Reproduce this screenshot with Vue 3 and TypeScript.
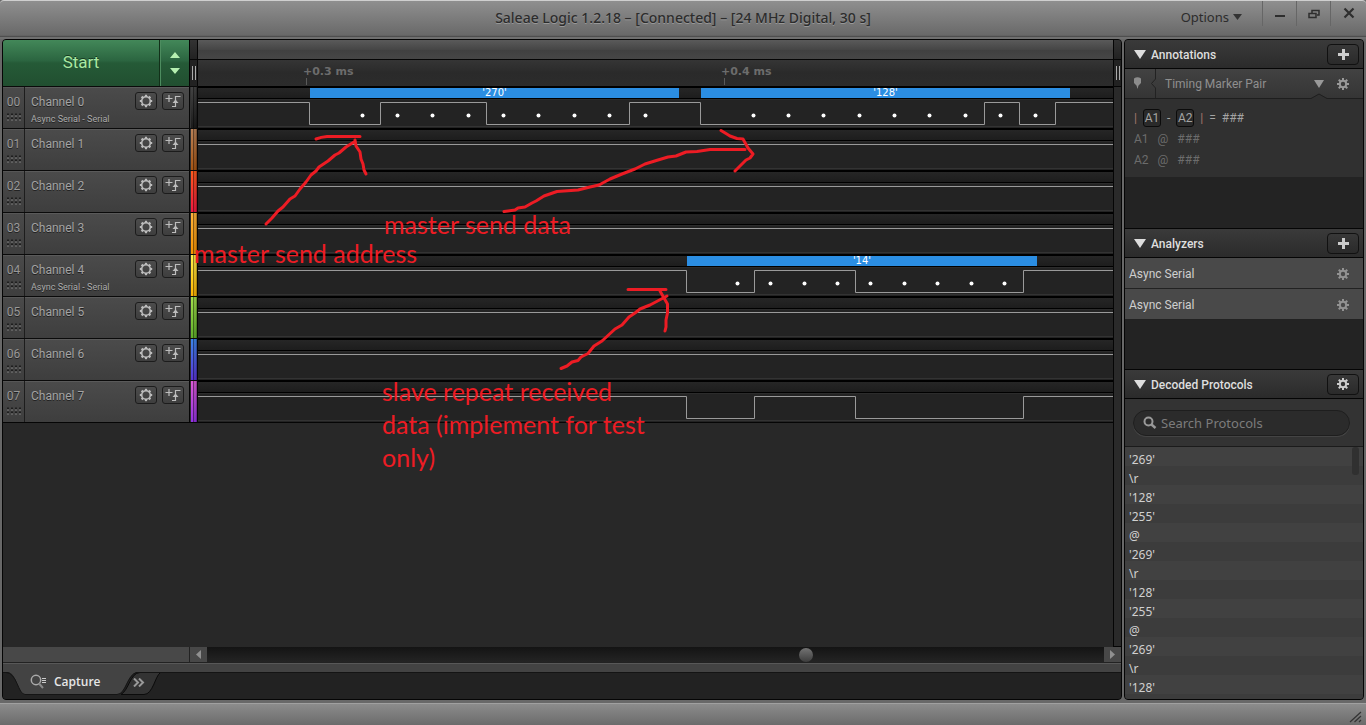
<script setup lang="ts">
import { ref } from 'vue'

interface Wave {
  edges: number[]
  samples: number[]
  frames: { x: number; width: number; text: string }[]
}
interface Channel {
  id: string
  name: string
  note: string
  strip: string
  wave: Wave
}

const idle: Wave = { edges: [], samples: [], frames: [] }
const masterWave: Wave = {
  edges: [111, 182, 288, 431, 502, 786, 821, 857],
  samples: [164, 199, 234, 270, 305, 340, 376, 411, 447, 555, 590, 625, 661, 696, 731, 767, 802, 837],
  frames: [
    { x: 112, width: 369, text: "'270'" },
    { x: 503, width: 369, text: "'128'" },
  ],
}
const slaveEdges = [488, 556, 657, 825]
const slaveWave: Wave = {
  edges: slaveEdges,
  samples: [539, 572, 606, 639, 672, 706, 739, 773, 806],
  frames: [{ x: 489, width: 350, text: "'14'" }],
}

const channels: Channel[] = [
  { id: '00', name: 'Channel 0', note: 'Async Serial - Serial', strip: 'black', wave: masterWave },
  { id: '01', name: 'Channel 1', note: '', strip: 'brown', wave: idle },
  { id: '02', name: 'Channel 2', note: '', strip: 'red', wave: idle },
  { id: '03', name: 'Channel 3', note: '', strip: 'orange', wave: idle },
  { id: '04', name: 'Channel 4', note: 'Async Serial - Serial', strip: 'yellow', wave: slaveWave },
  { id: '05', name: 'Channel 5', note: '', strip: 'green', wave: idle },
  { id: '06', name: 'Channel 6', note: '', strip: 'blue', wave: idle },
  { id: '07', name: 'Channel 7', note: '', strip: 'violet', wave: { edges: slaveEdges, samples: [], frames: [] } },
]

const HIGH = 16.5
const LOW = 38.5

// The line starts high and toggles at every edge.
function tracePath(edges: number[]): string {
  let level = HIGH
  let d = `M0 ${level}`
  for (const edge of edges) {
    level = level === HIGH ? LOW : HIGH
    d += `H${edge + 0.5}V${level}`
  }
  return `${d}H4000`
}

const teeth = [0, 45, 90, 135, 180, 225, 270, 315]
const analyzers = ['Async Serial', 'Async Serial']
const decoded = ["'269'", '\\r', "'128'", "'255'", '@', "'269'", '\\r', "'128'", "'255'", '@', "'269'", '\\r', "'128'"]
const query = ref('')
const scroll = ref(67)
</script>

<template>
  <div class="window">
    <svg class="defs" width="0" height="0" aria-hidden="true">
      <symbol id="gear" viewBox="0 0 14 14">
        <circle cx="7" cy="7" r="3.2" fill="none" stroke="currentColor" stroke-width="2" />
        <path v-for="a in teeth" :key="a" d="M6 3.500V1H8V3.500Z" fill="currentColor" :transform="`rotate(${a} 7 7)`" />
      </symbol>
      <symbol id="gear-open" viewBox="0 0 14 14">
        <circle cx="7" cy="7" r="4.300" fill="none" stroke="currentColor" stroke-width="1.600" />
        <path v-for="a in teeth" :key="a" d="M5.900 3V.8H8.100V3Z" fill="currentColor" :transform="`rotate(${a} 7 7)`" />
      </symbol>
      <symbol id="trigger" viewBox="0 0 16 14">
        <path d="M.5 4.500H7.500M4 1V8M7 12.500H10.500V2.500H15.500" fill="none" stroke="currentColor" stroke-width="1.200" />
        <path d="M7.500 9L10.500 5.500L13.500 9Z" fill="currentColor" />
      </symbol>
    </svg>

    <header class="titlebar">
      <h1>Saleae Logic 1.2.18 – [Connected] – [24 MHz Digital, 30 s]</h1>
      <div class="title-actions">
        <button class="options" type="button">Options
          <svg width="9" height="6" viewBox="0 0 9 6"><path d="M0 0H9L4.5 6Z" fill="#333" /></svg>
        </button>
        <button class="win" type="button" aria-label="Minimize">
          <svg width="12" height="12" viewBox="0 0 12 12"><path d="M1 8H11" stroke="#2e2e2e" stroke-width="2" /></svg>
        </button>
        <button class="win" type="button" aria-label="Restore">
          <svg width="12" height="12" viewBox="0 0 12 12"><path d="M4 5V2.5H11V7H9M1 5.5H8V9.500H1Z" fill="none" stroke="#2e2e2e" stroke-width="1.500" /></svg>
        </button>
        <button class="win last" type="button" aria-label="Close">
          <svg width="12" height="12" viewBox="0 0 12 12"><path d="M1.500 1.500L10.500 10.500M10.500 1.500L1.500 10.500" stroke="#2e2e2e" stroke-width="2.200" /></svg>
        </button>
      </div>
    </header>

    <div class="content">
      <main class="main">
        <div class="workspace">
          <div class="board">
            <div class="head">
              <div class="start">
                <button class="start-run" type="button">Start</button>
                <button class="start-menu" type="button" aria-label="Capture settings">
                  <svg width="10" height="22" viewBox="0 0 10 22"><path d="M5 0L10 6H0ZM0 16H10L5 22Z" fill="#b5efb0" /></svg>
                </button>
              </div>
              <div class="grip"><i></i><b></b></div>
              <div class="timeline">
                <div class="overview"></div>
                <svg class="ruler" width="100%" height="26">
                  <text x="105" y="15">+0.3 ms</text>
                  <text x="523" y="15">+0.4 ms</text>
                  <path d="M108.500 18V25M526.500 18V25" stroke="#5a5a5a" />
                </svg>
              </div>
            </div>

            <section v-for="c in channels" :key="c.id" class="channel">
              <div class="index">
                <span>{{ c.id }}</span>
                <svg width="16" height="8" viewBox="0 0 16 8">
                  <path d="M1 1.500H15M1 5.500H15" stroke="#1e1e1e" stroke-width="2" stroke-dasharray="2 2" />
                  <path d="M1 3H15M1 7H15" stroke="#808080" stroke-dasharray="2 2" />
                </svg>
              </div>
              <div class="label">
                <div class="names">
                  <span class="name">{{ c.name }}</span>
                  <span v-if="c.note" class="note">{{ c.note }}</span>
                </div>
                <button type="button" class="small" :aria-label="c.name + ' settings'">
                  <svg width="14" height="14"><use href="#gear-open" /></svg>
                </button>
                <button type="button" class="small" :aria-label="c.name + ' trigger'">
                  <svg width="16" height="14"><use href="#trigger" /></svg>
                </button>
              </div>
              <div class="strip" :class="c.strip"></div>
              <div class="plot">
                <svg width="100%" height="42">
                  <g v-for="f in c.wave.frames" :key="f.x">
                    <rect :x="f.x" y="2" :width="f.width" height="10" fill="#2b8ee3" />
                    <text class="frame" :x="f.x + f.width / 2" y="10">{{ f.text }}</text>
                  </g>
                  <path :d="tracePath(c.wave.edges)" fill="none" stroke="#9a9a9a" />
                  <circle v-for="s in c.wave.samples" :key="s" :cx="s + 0.5" cy="29.500" r="2" fill="#fff" />
                </svg>
              </div>
            </section>
            <div class="blank"></div>
          </div>
          <div class="rail"><i></i><b></b><u></u></div>
        </div>

        <div class="scroller">
          <div class="scroll-left"></div>
          <button type="button" class="arrow" aria-label="Scroll left">
            <svg width="5" height="9" viewBox="0 0 5 9"><path d="M5 0V9L0 4.500Z" fill="#909090" /></svg>
          </button>
          <input v-model="scroll" class="slide" type="range" min="0" max="100" aria-label="Timeline position">
          <button type="button" class="arrow" aria-label="Scroll right">
            <svg width="5" height="9" viewBox="0 0 5 9"><path d="M0 0V9L5 4.500Z" fill="#909090" /></svg>
          </button>
        </div>
        <div class="band"></div>

        <nav class="tabs">
          <svg class="tab-shape" width="170" height="24" viewBox="0 0 170 24">
            <path d="M118 22.500C126 18 127 1 137 .5H157.500C152 4 150 22.500 141 22.500Z" fill="#333" stroke="#0b0b0b" />
            <path d="M0 0H4C14 0 15 22.500 22 22.500H114C123 22.500 124 2 134 0Z" fill="#434343" />
            <path d="M0 .5H3C14 .5 15 22.500 22 22.500H114C123 22.500 124 2 134 .5H170" fill="none" stroke="#141414" />
          </svg>
          <button type="button" class="tab">
            <svg width="17" height="16" viewBox="0 0 17 16"><circle cx="6" cy="6" r="4.700" fill="none" stroke="#aaa" stroke-width="1.500" /><path d="M9 9.500L13 14" stroke="#888" stroke-width="2" /><path d="M12 4.500H16M12 6.500H16M12 8.500H16" stroke="#ccc" /></svg>
            Capture
          </button>
          <button type="button" class="more" aria-label="More tabs">
            <svg width="12" height="9" viewBox="0 0 12 9"><path d="M1 0.500L5 4.500L1 8.500M6 0.500L10 4.500L6 8.500" fill="none" stroke="#999" stroke-width="2" /></svg>
          </button>
        </nav>
      </main>

      <aside class="side">
        <section class="panel annotations">
          <header>
            <svg class="caret" width="12" height="9" viewBox="0 0 12 9"><path d="M0 0H12L6 9Z" fill="#ddd" /></svg>
            <h2>Annotations</h2>
            <button type="button" aria-label="Add annotation"><svg width="11" height="11" viewBox="0 0 11 11"><path d="M5.500 0V11M0 5.500H11" stroke="#ccc" stroke-width="3" /></svg></button>
          </header>
          <div class="marker-head">
            <svg width="31" height="29" viewBox="0 0 31 29">
              <path d="M9 9.500Q12.500 7 16 9.500V14L13.500 16.500L12.500 20L11.500 16.500L9 14Z" fill="#8c8c8c" />
              <path d="M30.500 0V10L26.500 14.500L30.500 19V29" fill="none" stroke="#222" />
            </svg>
            <span>Timing Marker Pair</span>
            <svg width="10" height="8" viewBox="0 0 10 8"><path d="M0 0H10L5 8Z" fill="#999" /></svg>
            <svg class="dim" width="14" height="14"><use href="#gear" /></svg>
            <svg class="notch" width="16" height="6" viewBox="0 0 16 6"><path d="M0 5.500L8 1L16 5.500V6H0Z" fill="#303030" /><path d="M0 5.500L8 1L16 5.500" fill="none" stroke="#1e1e1e" /></svg>
          </div>
          <div class="marker-body">
            <div class="formula"><span class="bar">|</span><kbd>A1</kbd><span>-</span><kbd>A2</kbd><span class="bar">|</span><span>=</span><span>###</span></div>
            <div class="pair"><span>A1</span><span>@</span><span>###</span></div>
            <div class="pair"><span>A2</span><span>@</span><span>###</span></div>
          </div>
        </section>

        <section class="panel analyzers">
          <header>
            <svg class="caret" width="12" height="9" viewBox="0 0 12 9"><path d="M0 0H12L6 9Z" fill="#ddd" /></svg>
            <h2>Analyzers</h2>
            <button type="button" aria-label="Add analyzer"><svg width="11" height="11" viewBox="0 0 11 11"><path d="M5.500 0V11M0 5.500H11" stroke="#ccc" stroke-width="3" /></svg></button>
          </header>
          <div v-for="(a, i) in analyzers" :key="i" class="analyzer">
            <span>{{ a }}</span>
            <button type="button" aria-label="Analyzer settings"><svg width="14" height="14"><use href="#gear" /></svg></button>
          </div>
        </section>

        <section class="panel protocols">
          <header>
            <svg class="caret" width="12" height="9" viewBox="0 0 12 9"><path d="M0 0H12L6 9Z" fill="#ddd" /></svg>
            <h2>Decoded Protocols</h2>
            <button type="button" aria-label="Protocol settings"><svg width="14" height="14"><use href="#gear" /></svg></button>
          </header>
          <div class="search">
            <label>
              <svg width="14" height="14" viewBox="0 0 14 14"><circle cx="5.500" cy="5.500" r="4" fill="none" stroke="#999" stroke-width="2" /><path d="M8.500 8.500L12.500 12" stroke="#999" stroke-width="2.400" /></svg>
              <input v-model="query" type="text" placeholder="Search Protocols" aria-label="Search Protocols">
            </label>
          </div>
          <ul>
            <li v-for="(d, i) in decoded" :key="i">{{ d }}</li>
          </ul>
          <i class="thumb"></i>
        </section>
      </aside>
    </div>

    <footer class="status">
      <svg width="14" height="14" viewBox="0 0 14 14"><path d="M1 12L12 2M5.500 12L12 6M10 12L12 10" stroke="#333" stroke-width="1.200" /></svg>
    </footer>

    <svg class="markup" aria-hidden="true">
      <g fill="none" stroke="#ed1c24" stroke-width="3" stroke-linecap="round" stroke-linejoin="round">
        <path d="M316 139Q321 137 327 136.500H360M355 140L356 146L360 152L361 159L363 164L364 170L366 174M266 224L272 218L278 211L283 207L290 199L295 196L300 189L306 182L311 175L316 171L319 167L325 163L328 161L335 155L339 153L346 147L354 142" />
        <path d="M504 211.500L515 210L518 208L525 207L532 203L536 201L544 196L557 191.500L578 190L590 187L599 185L610 179L622 174L635 169L645 164L658 160L668 157L676 156L686 152L697 151.500L710 149.500H745M721 130.500L726 133.500L730 136L737 138.500L743 139L748 148L753 154L750 158L746 160L741 165L735 171" />
        <path d="M628 289.500H666M660 291L664 298L667.500 304V313L666 320V327L665 331M561 368.500L567 366L572 362L578 360.500L581 357L588 353.500L594 346L602 341L615 329L622 325L629 317L635 313L640 309L650 305L667 296" />
      </g>
      <text x="384" y="234">master send data</text>
      <text x="194" y="263">master send address</text>
      <text x="382" y="401">slave repeat received</text>
      <text x="382" y="434">data (implement for test</text>
      <text x="382" y="467">only)</text>
    </svg>
  </div>
</template>

<style>
body {
  margin: 0;
  background: #666;
}
</style>

<style scoped>
* {
  box-sizing: border-box;
}
button {
  border: 0;
  padding: 0;
  margin: 0;
  background: none;
  font: inherit;
  color: inherit;
}
svg {
  display: block;
}
.defs {
  position: absolute;
}
.window {
  position: relative;
  display: flex;
  flex-direction: column;
  height: 100vh;
  overflow: hidden;
  background: #686868;
  font: 12px/16px Roboto, "Liberation Sans", sans-serif;
  color: #aaa;
}
.titlebar {
  position: relative;
  display: flex;
  justify-content: flex-end;
  flex: none;
  height: 39px;
  border-top: 1px solid #cfcfcf;
  border-bottom: 2px solid #707070;
  border-radius: 4px 4px 0 0;
  background: linear-gradient(#8f8f8f, #696969 95%, #444);
}
h1 {
  position: absolute;
  left: 0;
  right: 0;
  top: 7px;
  margin: 0;
  text-align: center;
  font: 500 14px/20px "Noto Sans", "Open Sans", sans-serif;
  color: #2c2c2c;
  text-shadow: 0 1px 0 #999;
}
.title-actions {
  position: relative;
  display: flex;
}
.options {
  display: flex;
  align-items: center;
  gap: 4px;
  height: 32px;
  padding-right: 20px;
  font: 13px/20px "Noto Sans", sans-serif;
  color: #2c2c2c;
}
.win {
  display: flex;
  justify-content: center;
  width: 34px;
  height: 25px;
  padding-top: 7px;
  border-left: 1px solid #666;
}
.win.last {
  width: 36px;
  padding-top: 6px;
}
.content {
  display: flex;
  flex: 1;
  gap: 2px;
  min-height: 0;
  padding: 0 2px;
}
.main {
  display: flex;
  flex-direction: column;
  flex: 1;
  min-width: 0;
  border: 1px solid #050505;
  border-radius: 4px;
  overflow: hidden;
  background: #222;
}
.workspace {
  display: flex;
  flex: 1;
  min-height: 0;
}
.board {
  display: flex;
  flex-direction: column;
  flex: 1;
  min-width: 0;
}
.head {
  display: flex;
  flex: none;
  height: 46px;
}
.start {
  display: flex;
  flex: none;
  width: 187px;
  border-right: 1px solid #050505;
  background: linear-gradient(#438859, #2b6540 45%, #255a37 50%, #214f30);
}
.start-run {
  flex: 1;
  padding-bottom: 2px;
  font-size: 17px;
  line-height: 20px;
  color: #a9e8a2;
  text-shadow: 0 -1px 0 #173a22;
}
.start-menu {
  display: flex;
  align-items: center;
  justify-content: center;
  width: 30px;
  border-left: 1px solid #123019;
  box-shadow: inset 1px 0 0 #4d8c5f;
}
.grip {
  flex: none;
  width: 8px;
  border-right: 1px solid #050505;
}
.grip i,
.rail i {
  display: block;
  height: 20px;
  border-bottom: 1px solid #050505;
  background: linear-gradient(#333, #222);
}
.grip b,
.rail b {
  display: block;
  width: 4px;
  height: 14px;
  margin: 6px auto 6px 2px;
  border: 1px solid #aaa;
  border-width: 0 1px;
}
.timeline {
  flex: 1;
  min-width: 0;
}
.overview {
  height: 20px;
  border-bottom: 1px solid #050505;
  background: linear-gradient(#5a5a5a, #464646 50%, #404040 52%, #464646);
}
.ruler {
  background: linear-gradient(#353535, #2a2a2a 50%, #2c2c2c);
  font: 700 11px "DejaVu Sans", sans-serif;
  fill: #6c6c6c;
}
.channel {
  display: flex;
  flex: none;
  height: 42px;
  border-top: 1px solid #0a0a0a;
}
.index {
  display: flex;
  flex-direction: column;
  align-items: center;
  flex: none;
  width: 22px;
  padding-top: 7px;
  border-right: 1px solid #1d1d1d;
  background: linear-gradient(#4a4a4a, #3e3e3e);
  box-shadow: inset 0 1px 0 #565656;
  color: #999;
  text-shadow: 0 1px 0 #222;
}
.index svg {
  margin-top: 3px;
}
.label {
  display: flex;
  gap: 5px;
  flex: none;
  width: 165px;
  padding: 5px 5px 0 6px;
  border-right: 1px solid #050505;
  background: linear-gradient(#4b4b4b, #3e3e3e);
  box-shadow: inset 0 1px 0 #5a5a5a;
}
.names {
  display: flex;
  flex-direction: column;
  flex: 1;
  padding-top: 2px;
  text-shadow: 0 1px 0 #222;
}
.name {
  color: #a4a4a4;
}
.note {
  padding-top: 1px;
  font-size: 9px;
  white-space: nowrap;
  color: #acacac;
}
.small {
  display: flex;
  align-items: center;
  justify-content: center;
  flex: none;
  width: 22px;
  height: 18px;
  border: 1px solid #1c1c1c;
  border-radius: 3px;
  background: linear-gradient(#4c4c4c, #3e3e3e);
  color: #bdbdbd;
}
.strip {
  position: relative;
  flex: none;
  width: 8px;
  border-left: 1px solid #333;
  border-right: 1px solid #050505;
}
.strip::after {
  content: "";
  display: block;
  height: 100%;
  background: linear-gradient(90deg, transparent 33%, #0007 33% 50%, #0002 50% 83%, #0005 83%);
}
.strip.black { background: linear-gradient(#444, #1b1b1b); }
.strip.brown { background: linear-gradient(#b98157, #a85513); }
.strip.red { background: linear-gradient(#ff5a1e, #f0173f); }
.strip.orange { background: linear-gradient(#ffb23a, #f79400); }
.strip.yellow { background: linear-gradient(#fff04b, #ffb300); }
.strip.green { background: linear-gradient(#a3e04b, #5fae2a); }
.strip.blue { background: linear-gradient(#3c86ea, #5a35d8); }
.strip.violet { background: linear-gradient(#dc5ad6, #9433e4); }
.plot {
  flex: 1;
  min-width: 0;
  height: 42px;
  margin-top: -1px;
  background: linear-gradient(#000 0 2px, #262626 2px, #1d1d1d 12px, #000 12px 13px, #2c2c2c 13px 14px, #232323 14px 40px, #333 40px 41px, #232323 41px);
}
.frame {
  font: 10px "DejaVu Sans", sans-serif;
  text-anchor: middle;
  fill: #fff;
}
.blank {
  flex: 1;
  border-top: 1px solid #050505;
  background: #282828;
}
.rail {
  display: flex;
  flex-direction: column;
  flex: none;
  width: 8px;
  border-left: 1px solid #050505;
}
.rail u {
  flex: 1;
  border-top: 1px solid #050505;
  border-bottom: 1px solid #050505;
  background: #2a2a2a;
}
.scroller {
  display: flex;
  flex: none;
  height: 15px;
}
.scroll-left {
  width: 187px;
  border-right: 1px solid #222;
  background: #484848;
}
.arrow {
  display: flex;
  align-items: center;
  justify-content: center;
  flex: none;
  width: 17px;
  background: #484848;
}
.slide {
  appearance: none;
  flex: 1;
  min-width: 0;
  height: 15px;
  margin: 0;
  background: linear-gradient(#141414, #242424);
}
.slide::-webkit-slider-thumb {
  appearance: none;
  width: 14px;
  height: 14px;
  border-radius: 50%;
  background: linear-gradient(#737373, #3d3d3d);
}
.band {
  flex: none;
  height: 10px;
  border-top: 1px solid #222;
  background: #434343;
  box-shadow: inset 0 1px 0 #585858;
}
.tabs {
  position: relative;
  display: flex;
  flex: none;
  height: 27px;
  border-top: 0;
  background: #222;
  box-shadow: inset 0 1px 0 #141414;
}
.tab-shape {
  position: absolute;
  left: 0;
  top: 0;
}
.tab,
.more {
  position: relative;
  display: flex;
  align-items: center;
  height: 20px;
}
.tab {
  gap: 7px;
  width: 126px;
  padding-left: 27px;
  font: 600 12px/16px "Open Sans", sans-serif;
  color: #e6e6e6;
}
.more {
  padding: 0 4px;
}
.side {
  display: flex;
  flex-direction: column;
  flex: none;
  width: 240px;
  border: 1px solid #050505;
  border-radius: 4px;
  overflow: hidden;
  background: #232323;
}
.panel {
  flex: none;
}
.annotations {
  height: 188px;
}
.analyzers {
  height: 141px;
}
.protocols {
  position: relative;
  display: flex;
  flex-direction: column;
  flex: 1;
  min-height: 0;
}
.panel header {
  display: flex;
  align-items: center;
  flex: none;
  height: 30px;
  padding: 0 4px 0 9px;
  border-top: 1px solid #050505;
  border-bottom: 1px solid #050505;
  background: linear-gradient(#3a3a3a, #2b2b2b);
}
.panel.annotations header {
  height: 29px;
  border-top: 0;
}
h2 {
  flex: 1;
  margin: 0;
  padding: 1px 0 0 5px;
  font: 500 12px/16px Roboto, sans-serif;
  color: #dedede;
}
.panel header button {
  display: flex;
  align-items: center;
  justify-content: center;
  width: 32px;
  height: 21px;
  border: 1px solid #111;
  border-radius: 4px;
  background: linear-gradient(#383838, #2a2a2a);
  color: #ccc;
}
.marker-head {
  position: relative;
  display: flex;
  align-items: center;
  height: 30px;
  padding-right: 13px;
  border-bottom: 1px solid #1e1e1e;
  background: linear-gradient(#424242, #353535);
}
.marker-head span {
  flex: 1;
  padding-left: 9px;
  color: #8f8f8f;
}
.dim {
  margin-left: 12px;
  color: #999;
}
.notch {
  position: absolute;
  right: 36px;
  bottom: -1px;
}
.marker-body {
  display: flex;
  flex-direction: column;
  gap: 3px;
  height: 78px;
  padding: 10px 9px 0;
  background: #303030;
  color: #6c6c6c;
}
.formula,
.pair {
  display: flex;
  align-items: center;
  height: 18px;
}
.formula {
  gap: 6px;
  color: #a4a4a4;
}
.pair {
  gap: 9px;
}
.bar {
  color: #a2786d;
}
kbd {
  width: 18px;
  height: 18px;
  border: 1px solid #0b0b0b;
  border-radius: 3px;
  background: #2a2a2a;
  font: 12px/17px Roboto, sans-serif;
  text-align: center;
}
.analyzer {
  display: flex;
  align-items: center;
  justify-content: space-between;
  height: 31px;
  padding: 2px 13px 0 4px;
  border-bottom: 1px solid #222;
  background: #494949;
  color: #cfcfcf;
}
.analyzer button {
  color: #929292;
}
.search {
  flex: none;
  height: 48px;
  padding: 11px 13px 0 8px;
  border-bottom: 1px solid #1b1b1b;
  background: #333;
}
.search label {
  display: flex;
  align-items: center;
  gap: 4px;
  height: 26px;
  padding-left: 9px;
  border: 1px solid #1e1e1e;
  border-radius: 13px;
  background: #2b2b2b;
  box-shadow: 0 1px 0 #444;
}
.search input {
  flex: 1;
  min-width: 0;
  padding: 0;
  border: 0;
  outline: 0;
  background: none;
  font: 13px/18px "Noto Sans", sans-serif;
  color: #ccc;
}
.search input::placeholder {
  color: #7c7c7c;
}
ul {
  flex: 1;
  min-height: 0;
  margin: 0;
  padding: 0;
  overflow: hidden;
  list-style: none;
  font: 12px/19px "Noto Sans", sans-serif;
  color: #d0d0d0;
  background: #3c3c3c;
}
li {
  height: 19px;
  padding: 3px 4px 0;
  line-height: 19px;
  background: #414141;
}
li:nth-child(even) {
  background: #3c3c3c;
}
.thumb {
  position: absolute;
  right: 4px;
  top: 78px;
  width: 7px;
  height: 28px;
  border-radius: 3px;
  background: #303030;
}
.status {
  display: flex;
  justify-content: flex-end;
  align-items: flex-end;
  flex: none;
  height: 22px;
  margin-top: 3px;
  padding: 0 3px 1px;
  border-top: 1px solid #a0a0a0;
  background: linear-gradient(#8c8c8c, #6b6b6b);
}
.markup {
  position: absolute;
  left: 0;
  top: 0;
  width: 100%;
  height: 100%;
  pointer-events: none;
  font: 25px Lato, "Open Sans", sans-serif;
}
.markup text {
  fill: #ed1c24;
}
</style>
